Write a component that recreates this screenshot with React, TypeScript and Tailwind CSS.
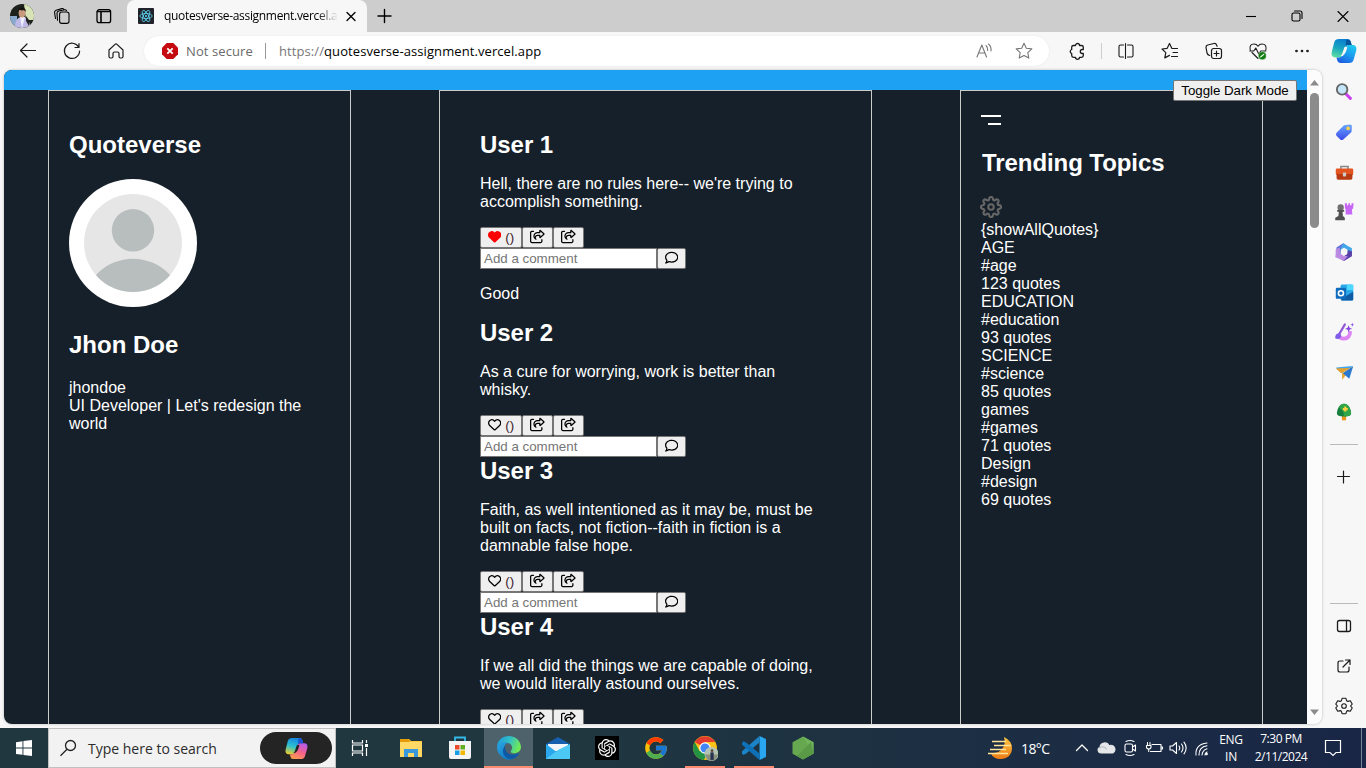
import type { ReactNode } from "react";
import { FaHeart, FaRegHeart, FaRegComment, FaRegShareFromSquare } from "react-icons/fa6";
import { FiSettings } from "react-icons/fi";
import { SiOpenai } from "react-icons/si";
import { FcGoogle } from "react-icons/fc";

type IconProps = { size?: number; children: ReactNode; w?: number; className?: string };

function Line({ size = 20, w = 1.1, children, className = "" }: IconProps) {
  return (
    <svg width={size} height={size} viewBox="0 0 20 20" fill="none" stroke="currentColor" strokeWidth={w} strokeLinecap="round" strokeLinejoin="round" className={`shrink-0 ${className}`}>
      {children}
    </svg>
  );
}

function Art({ size = 24, children }: IconProps) {
  return (
    <svg width={size} height={size} viewBox="0 0 24 24" fill="none" className="shrink-0">
      {children}
    </svg>
  );
}

function TabStrip() {
  return (
    <header className="flex h-8 shrink-0 bg-[#cdcdcd] text-black">
      <div className="flex w-[127px] items-center">
        <div className="ml-[10px] flex h-6 w-6 items-center justify-center overflow-hidden rounded-full">
          <svg width="24" height="24" viewBox="0 0 24 24">
            <rect width="24" height="24" fill="#1c211c" />
            <path d="M14 0h10v16h-8z" fill="#d8e4b5" />
            <path d="M0 12h7v12H0z" fill="#8aa9ce" />
            <path d="M5 24c0-7 2-11 7-11s8 4 8 11z" fill="#bdb8e6" />
            <path d="M10 13l2 11 3-11z" fill="#eef" />
            <ellipse cx="12" cy="9" rx="3.4" ry="4.6" fill="#c99a7d" />
            <path d="M8 8c-1-5 8-7 8 0l-2-2c-2 1-4 0-5 0z" fill="#17120f" />
            <path d="M16 12l3 4v6l-3-5z" fill="#222" />
          </svg>
        </div>
        <Line className="ml-[18px]">
          <rect x="7.6" y="6" width="9.4" height="11.4" rx="2.2" />
          <path d="M5.5 14.2 5 7.5Q4.900 5.500 6.800 5L12.600 3.800q1.400-.2 1.900.9M3.500 12.500 2.600 6.800q-.3-1.900 1.500-2.500l5.700-1.700q1.200-.3 1.900.6" />
        </Line>
        <Line className="ml-[22px]" w={1.3}>
          <rect x="3" y="3.700" width="13.600" height="13" rx="2.200" />
          <path d="M3.500 5.500h12.600M7 6.500v10" strokeWidth="1.600" />
        </Line>
      </div>
      <div className="flex h-8 w-[240px] items-center rounded-t-lg bg-[#f7f7f7]">
        <svg width="16" height="16" viewBox="0 0 16 16" className="ml-[11px] shrink-0" fill="none" stroke="#61dafb" strokeWidth=".8">
          <rect width="16" height="16" rx="1" fill="#20232a" stroke="none" />
          <ellipse cx="8" cy="8" rx="6.200" ry="2.500" />
          <ellipse cx="8" cy="8" rx="6.200" ry="2.500" transform="rotate(60 8 8)" />
          <ellipse cx="8" cy="8" rx="6.200" ry="2.500" transform="rotate(120 8 8)" />
          <circle cx="8" cy="8" r="1" fill="#61dafb" stroke="none" />
        </svg>
        <div className="ml-[10px] w-[174px] overflow-hidden bg-gradient-to-r from-black from-88% to-transparent bg-clip-text text-[12px] tracking-[-0.32px] whitespace-nowrap text-transparent">
          quotesverse-assignment.vercel.app
        </div>
        <Line className="ml-[3px]" w={1.300}>
          <path d="M6 6.500l8 8M14 6.500l-8 8" />
        </Line>
      </div>
      <div className="flex w-[34px] items-center justify-center">
        <Line w={1.400} className="-mt-px">
          <path d="M10.500 3.500v13M4 10h13" />
        </Line>
      </div>
      <div className="ml-auto flex w-[138px] items-center justify-around">
        <Line>
          <path d="M5 10.500h10" strokeLinecap="butt" />
        </Line>
        <Line>
          <rect x="5" y="7" width="8" height="8" rx="1.500" />
          <path d="M7.500 5h5.500q2 0 2 2v5.500" />
        </Line>
        <Line>
          <path d="M5 5.500l10 10M15 5.500L5 15.500" />
        </Line>
      </div>
    </header>
  );
}

function CopilotMark({ size = 26, dark = false }: { size?: number; dark?: boolean }) {
  const id = dark ? "cd" : "cl";
  return (
    <svg width={size} height={size} viewBox="0 0 24 24" className="shrink-0">
      <defs>
        <linearGradient id={`${id}1`} x1="0.500" y1="0" x2="0.200" y2="1">
          <stop offset="0" stopColor={dark ? "#1785e0" : "#0b7fd0"} />
          <stop offset=".5" stopColor={dark ? "#2ac0d0" : "#1aa6c0"} />
          <stop offset="1" stopColor={dark ? "#f2cd28" : "#5ee0a0"} />
        </linearGradient>
        <linearGradient id={`${id}2`} x1="0.800" y1="0" x2="0.300" y2="1">
          <stop offset="0" stopColor={dark ? "#b05cf0" : "#1fc8ee"} />
          <stop offset=".5" stopColor={dark ? "#f2608f" : "#1b9df0"} />
          <stop offset="1" stopColor={dark ? "#ff9a4d" : "#1e5fe0"} />
        </linearGradient>
      </defs>
      <path d="M7.500 1h8q2 0 2.600 2l1 3.500h-3c-1.800 0-2.700 1-3.200 2.500l-2 6c-.6 1.800-1.500 3-3.500 3H4c-2.500 0-4-2-3.300-5l2.300-9C3.700 2 5 1 7.500 1z" fill={`url(#${id}1)`} />
      <path d="M16.500 23h-8q-2 0-2.600-2l-.9-3h2.500c1.800 0 2.700-1 3.200-2.500l2-6c.6-1.800 1.500-3 3.500-3H20c2.500 0 4 2 3.300 5l-2.300 8c-.7 2.500-2 3.500-4.500 3.500z" fill={`url(#${id}2)`} />
      <path d="M14 1.500h2q1.600 0 2.100 1.700l1 3.300h-3c-1.200 0-2 .4-2.500 1.200z" fill={dark ? "#2251d0" : "#06559c"} />
      <path d="M12.300 8.500l2.700-.4q-.8 6-4.200 8.400l-2.300.2q1.500-.8 2-2.700z" fill={dark ? "#242424" : "#f7f7f7"} />
    </svg>
  );
}

function Toolbar() {
  const slot = "flex w-11 shrink-0 items-center justify-center";
  return (
    <nav className="flex h-[38px] shrink-0 items-center bg-[#f7f7f7] text-[#1b1b1b]">
      <div className="flex w-[144px] pl-[6px]">
        <div className={slot}>
          <Line w={1.200}><path d="M17.500 9.500H2.500M9 3L2.500 9.500 9 16" /></Line>
        </div>
        <div className={slot}>
          <Line w={1.200}><path d="M16.700 6.200A7.600 7.600 0 1 0 17.600 10M17 2.500v4h-4" /></Line>
        </div>
        <div className={slot}>
          <Line w={1.200}><path d="M3 9l6-5.600q1-.9 2 0L17 9v6.500q0 1.500-1.500 1.500h-1q-1.500 0-1.500-1.500v-3q0-1.500-1.500-1.500h-3Q7 11 7 12.500v3Q7 17 5.500 17h-1Q3 17 3 15.500z" /></Line>
        </div>
      </div>
      <div className="flex h-[30px] w-[905px] items-center rounded-full bg-white shadow-[0_0_2px_#e4e4e4]">
        <svg width="16" height="16" viewBox="0 0 16 16" className="ml-[18px]">
          <path d="M4.700 0h6.600L16 4.700v6.600L11.300 16H4.700L0 11.300V4.700z" fill="#c50b0f" />
          <path d="M5.300 5.300l5.400 5.400M10.700 5.300l-5.400 5.400" stroke="#fff" strokeWidth="1.800" />
        </svg>
        <span className="ml-2 w-[68px] pt-px text-[13px] tracking-[0.1px] whitespace-nowrap text-[#6a6a6a]">Not secure</span>
        <span className="ml-[11px] h-4 w-px bg-[#999]" />
        <span className="ml-[13px] pt-px text-[13px] tracking-[0.085px] whitespace-nowrap text-black">
          <span className="text-[#777]">https://</span>quotesverse-assignment.vercel.app
        </span>
        <div className="ml-auto mr-[15px] flex gap-5 text-[#777]">
          <Line>
            <path d="M3 16L7.800 4 12.500 16M4.800 12h6.200M12 4.500q2 1.800 1.700 5M14.500 3q3 2.500 2.500 7" />
          </Line>
          <Line>
            <path d="M10 2.200l2.300 5 5.500.7-4 3.800 1 5.400-4.800-2.700-4.800 2.700 1-5.400-4-3.800 5.500-.7z" />
          </Line>
        </div>
      </div>
      <div className="flex w-[53px] items-center">
        <Line className="ml-[18px]" w={1.300}>
          <path d="M6.500 4.500h2a2 2 0 0 1 4 0h2q1.800 0 1.800 1.800V8.500h-1a2 2 0 0 0 0 4h1v2q0 1.800-1.800 1.800h-2a2 2 0 0 1-4 0h-2q-1.800 0-1.800-1.800v-2a2.100 2.100 0 0 1 0-4V6.300q0-1.800 1.800-1.800z" />
        </Line>
        <span className="ml-[14px] h-4 w-px bg-[#ccc]" />
      </div>
      <div className="-ml-px flex">
        <div className="flex w-[49px] shrink-0 items-center justify-center">
          <Line><path d="M7.500 4H4.500Q3 4 3 5.500v9Q3 16 4.500 16h3M11.500 4h4Q17 4 17 5.500v9q0 1.500-1.500 1.500h-4M9.500 2.500v15" /></Line>
        </div>
        <div className="flex w-[39px] items-center justify-center">
          <Line w={1.2}><path d="M13 7.500L11.800 7.300 9.500 2.500 7.200 7.300 2 8l3.800 3.600-1 5.300 4.700-2.500M12.500 7.500H17.500M13 11.500h4.500M11.500 15.500h6" /></Line>
        </div>
        <div className="flex w-[49px] items-center justify-center">
          <Line w={1.2}><rect x="7.500" y="7.500" width="10" height="10" rx="2.200" /><path d="M12.500 10v5M10 12.500h5M5.700 14.500Q3.600 14 3 12L2 6.500Q1.800 4.500 3.700 4L10 2.500q2-.3 2.600 1.500l.5 1.300" /></Line>
        </div>
        <div className="flex w-[39px] items-center justify-center">
          <Line><path d="M2.200 9Q1 3 6 3q2.500 0 4 2.200Q11.500 3 14 3q5 0 3.900 6M4 11.500l6 6M1.800 10h4l2-3 3 6 2-3h5" /><circle cx="14.300" cy="14.700" r="4" fill="#107c10" stroke="#f7f7f7" strokeWidth=".4" /><path d="M12.800 15.800l3-2.400" stroke="#fff" /></Line>
        </div>
        <div className="flex w-[49px] items-center justify-center">
          <Line><circle cx="4.500" cy="10" r=".8" fill="currentColor" /><circle cx="10" cy="10" r=".8" fill="currentColor" /><circle cx="15.500" cy="10" r=".8" fill="currentColor" /></Line>
        </div>
      </div>
      <div className="ml-[5px]"><CopilotMark /></div>
    </nav>
  );
}

const actionButton = "flex h-[21px] items-center justify-center rounded-[2px] border border-[#767676] bg-[#efefef] pb-[2px] text-black";

type Quote = { user: string; lines: string[]; liked?: boolean; comment?: string };

const quotes: Quote[] = [
  { user: "User 1", lines: ["Hell, there are no rules here-- we're trying to", "accomplish something."], liked: true, comment: "Good" },
  { user: "User 2", lines: ["As a cure for worrying, work is better than", "whisky."] },
  { user: "User 3", lines: ["Faith, as well intentioned as it may be, must be", "built on facts, not fiction--faith in fiction is a", "damnable false hope."] },
  { user: "User 4", lines: ["If we all did the things we are capable of doing,", "we would literally astound ourselves."] },
];

function QuoteItem({ user, lines, liked, comment }: Quote) {
  return (
    <article>
      <h2 className="text-2xl leading-7 font-bold tracking-[-0.05px]">{user}</h2>
      <p className="my-4 whitespace-nowrap">
        {lines.map((l) => (
          <span key={l} className="block">{l}</span>
        ))}
      </p>
      <div className="flex text-[13.333px] leading-[17px]">
        <button className={`${actionButton} w-[42px] gap-1`}>
          {liked ? <FaHeart size={13.333} color="red" /> : <FaRegHeart size={13.333} />}
          <span className="pt-px text-[#3d1a30]">()</span>
        </button>
        <button className={`${actionButton} w-[31px]`}><FaRegShareFromSquare size={15} /></button>
        <button className={`${actionButton} w-[31px]`}><FaRegShareFromSquare size={15} /></button>
      </div>
      <div className="flex">
        <input className="h-[21px] w-[177px] border border-[#767676] bg-white px-[3px] text-[13.333px] text-black placeholder:text-[#757575]" placeholder="Add a comment" />
        <button className={`${actionButton} w-[29px]`}><FaRegComment size={13.333} /></button>
      </div>
      {comment && <p className="my-4">{comment}</p>}
    </article>
  );
}

const topics = ["AGE", "#age", "123 quotes", "EDUCATION", "#education", "93 quotes", "SCIENCE", "#science", "85 quotes", "games", "#games", "71 quotes", "Design", "#design", "69 quotes"];

function Page() {
  return (
    <main className="relative ml-1 flex h-[654px] w-[1318px] overflow-hidden rounded-lg bg-[#fcfcfc] shadow-[0_0_2px_1px_#d8d8d8]">
      <div className="flex w-[1303px] flex-col bg-[#16202a] font-['Liberation_Sans',Arial,sans-serif] text-base leading-[18px] text-white">
        <div className="h-5 shrink-0 bg-[#1da1f2]" />
        <div className="flex h-[634px] justify-between pr-11 pl-11">
          <section className="w-[303px] border-x border-t border-[#ccc] p-5">
            <h2 className="mt-5 text-2xl leading-7 font-bold">Quoteverse</h2>
            <svg width="128" height="128" viewBox="0 0 128 128" className="mt-5">
              <clipPath id="disc"><circle cx="64" cy="64" r="49" /></clipPath>
              <circle cx="64" cy="64" r="64" fill="#fff" />
              <circle cx="64" cy="64" r="49" fill="#e6e6e6" />
              <circle cx="64" cy="51.300" r="21.200" fill="#b8bebd" />
              <circle cx="64" cy="130" r="50.300" fill="#b8bebd" clipPath="url(#disc)" />
            </svg>
            <h2 className="mt-6 mb-5 text-2xl leading-7 font-bold">Jhon Doe</h2>
            <div>jhondoe</div>
            <div>UI Developer | Let's redesign the world</div>
          </section>
          <section className="w-[433px] overflow-hidden border-x border-t border-[#ccc] px-10 pt-10">
            {quotes.map((q) => <QuoteItem key={q.user} {...q} />)}
          </section>
          <section className="w-[303px] border-x border-t border-[#ccc] p-5">
            <svg width="20" height="18" viewBox="0 0 20 18" className="block" fill="#fff"><path d="M0 4h20v2H0zM7 12h13v2H7z" /></svg>
            <h2 className="mt-5 ml-px text-2xl leading-7 font-bold tracking-[-0.070px]">Trending Topics</h2>
            <FiSettings size={22} className="-ml-px mt-[19px] mb-[3px] block text-[#666]" strokeWidth={2.300} />
            <div>{"{showAllQuotes}"}</div>
            {topics.map((t) => <div key={t}>{t}</div>)}
          </section>
        </div>
      </div>
      <div className="flex w-[15px] flex-col items-center">
        <svg width="9" height="6" viewBox="0 0 9 6" className="mt-[10px]"><path d="M0 5.500L4.500 0 9 5.500z" fill="#8b8b8b" /></svg>
        <div className="mt-[7px] h-[135px] w-[9px] rounded-full bg-[#8b8b8b]" />
        <svg width="9" height="6" viewBox="0 0 9 6" className="mt-auto mb-[9px]"><path d="M0 .5L4.500 6 9 .5z" fill="#8b8b8b" /></svg>
      </div>
      <button className="absolute top-[10px] right-[25px] h-[21px] w-[124px] rounded-[2px] border border-[#767676] bg-[#efefef] font-['Liberation_Sans',Arial,sans-serif] text-[13.333px] leading-[19px] tracking-[-0.05px] whitespace-nowrap text-black">
        Toggle Dark Mode
      </button>
    </main>
  );
}

function Sidebar() {
  const cell = "flex h-10 items-center justify-center";
  return (
    <aside className="flex w-[44px] flex-col bg-[#f7f7f7] pt-[2px] text-[#1b1b1b]">
      <div className={cell}>
        <Art size={18}><path d="M14 14l6.500 6.500" stroke="#c840f0" strokeWidth="4" strokeLinecap="round" /><circle cx="9.500" cy="8.500" r="7" fill="#c4e6fa" stroke="#666" strokeWidth="2.500" /></Art>
      </div>
      <div className={cell}>
        <Art size={18}><path d="M12 3l8-1q2.500 0 2.500 2L22 12 11 22q-2 1.500-4 0l-5-5q-1.500-2 0-4z" fill="url(#tag)" /><circle cx="17.500" cy="7" r="2.500" fill="#ffd24a" /><defs><linearGradient id="tag" x1="0" y1="0" x2="0" y2="1"><stop stopColor="#68a8ff" /><stop offset="1" stopColor="#3a49e8" /></linearGradient></defs></Art>
      </div>
      <div className={cell}>
        <Art size={19}><path d="M7.500 8V4.500h9V8" stroke="#888" strokeWidth="2" /><rect x="1" y="7" width="22" height="8" rx="1.500" fill="#e45420" /><path d="M2 14h20v5q0 2-2 2H4q-2 0-2-2z" fill="#b83a12" /><rect x="10" y="12" width="4" height="5" rx="1" fill="#ccc" /></Art>
      </div>
      <div className={cell}>
        <Art size={20}>
          <path d="M13 1.500h2.500V4h1.700V1.500h2V4H21V1.500h2.500l-.5 6-1.500 1.500.5 6h-8V9L13 7z" fill="#c866f5" />
          <circle cx="8" cy="6.500" r="3.800" fill="#707070" /><path d="M3.800 9.500h8.400v2.200h-2l.5 5 2.300 2.300v3H1.500v-3l3.800-2.300.5-5h-2z" fill="#505050" />
        </Art>
      </div>
      <div className={cell}>
        <Art size={20}>
          <path d="M3 6.500L11 1.500l3 1.800L8.500 8v7L2 18.500z" fill="#5a70d8" />
          <path d="M11 1.500l10.500 6v8.700L16 12.500 16 9l-4-2-5 2.500z" fill="#44a8e8" />
          <path d="M21.500 11v6l-9.500 5.800-5-3 8.500-5 1-5z" fill="#5a3fa8" />
          <path d="M2 18.200V9l5-2.800v7l4.500 3.300 5 .5-5 5.500z" fill="#bb8ae2" />
          <path d="M12 7.800l4 2.300v4L12 16.400l-4-2.300v-4z" fill="#f7f7f7" />
        </Art>
      </div>
      <div className={cell}>
        <Art size={19}><rect x="7" y="2" width="16" height="20" rx="2" fill="#28a8ea" /><path d="M15 2h8v7h-8z" fill="#50d9ff" /><path d="M8 20l15-9v10q0 1-1 1H8z" fill="#0f5ca5" /><rect x="1" y="6" width="13" height="14" rx="1.500" fill="#0f6cbd" /><circle cx="7.500" cy="13" r="3.200" stroke="#fff" strokeWidth="2" /></Art>
      </div>
      <div className={cell}>
        <Art size={20}>
          <path d="M5 14.500Q6 20 12 20q7 0 7.500-9" stroke="#dd85f5" strokeWidth="4.500" />
          <path d="M13 3L6 15" stroke="#9358d8" strokeWidth="2.800" strokeLinecap="round" />
          <path d="M1.500 19.500q-.5-5.500 4.500-6 4 1.500 2 5-3 3-6.500 1z" fill="#7f5cea" />
          <path d="M17.500 4l1.200 3 3 1.200-3 1.200-1.200 3-1.200-3-3-1.200 3-1.200zM22 1l.6 1.700 1.600.6-1.600.6L22 5.600l-.6-1.700-1.600-.6 1.600-.6z" fill="#8848e8" />
        </Art>
      </div>
      <div className={cell}>
        <Art size={19}><path d="M1 6l22-2-15 9z" fill="#41a5ee" /><path d="M23 4L9 13v8l4-5z" fill="#e8a22b" /><path d="M1 7l18-1L8 13z" fill="#e8a22b" /><path d="M23 4L10 13l8 7z" fill="#2878d0" /><path d="M1 5.500L23 4 13 6.500z" fill="#41a5ee" /></Art>
      </div>
      <div className={cell}>
        <Art size={20}><path d="M9.500 16h5v6h-5z" fill="#ee9520" /><path d="M12 2C6 2 4 9 3.500 13c-.3 3.500 3 4.500 8.500 4.500s8.800-1 8.500-4.500C20 9 18 2 12 2z" fill="#16803f" /><path d="M12 2c-3 0-5 2-6.300 5q6 2 6.300 10.500c5.500 0 8.800-1 8.500-4.500C20 9 18 2 12 2z" fill="#30a648" /><path d="M13.500 5.500v6M10.500 8.500h6" stroke="#ffd040" strokeWidth="2.500" /></Art>
      </div>
      <div className="mx-auto mt-[12px] h-px w-7 bg-[#bbb]" />
      <div className="mt-[22px] flex justify-center"><Line w={1.200}><path d="M9.500 4v12M3.500 9.500h12" /></Line></div>
      <div className="mx-auto mt-[116px] h-px w-7 bg-[#bbb]" />
      <div className="mt-[2px]">
        <div className={cell}><Line w={1.300}><rect x="3.500" y="4.500" width="13" height="11" rx="2" /><path d="M12.500 5v10" /></Line></div>
        <div className={cell}><Line w={1.200}><path d="M9 5H6Q4 5 4 7v7q0 2 2 2h7q2 0 2-2v-3M11.500 4H16v4.500M16 4l-7 7" /></Line></div>
        <div className={cell}><Line><circle cx="10" cy="10" r="2.300" /><path d="M8.100 2.300h3.800l.7 2.400 1.200.7 2.500-.6 1.900 3.300L16.500 10l1.700 1.900-1.900 3.300-2.500-.6-1.200.7-.7 2.400H8.100l-.7-2.400-1.200-.7-2.500.6-1.900-3.300L3.500 10 1.800 8.100l1.900-3.300 2.500.6 1.200-.7z" /></Line></div>
      </div>
    </aside>
  );
}

function AppButton({ children, state = "" }: { children: ReactNode; state?: "" | "active" | "open" }) {
  const look = state === "active" ? "bg-[#4d626b]" : "";
  return (
    <div className={`flex h-10 w-[49px] flex-col items-center ${look}`}>
      <div className="flex h-[38px] w-full shrink-0 items-center justify-center pt-[2px]">{children}</div>
      {state && <div className={state === "active" ? "h-[2px] w-full bg-[#fb8b71]" : "h-[2px] w-10 bg-[#fb8b71]"} />}
    </div>
  );
}

function Taskbar() {
  return (
    <footer className="flex h-10 shrink-0 bg-gradient-to-r from-[#20373f] from-40% to-[#192646] text-white">
      <div className="flex w-12 items-center justify-center">
        <svg width="16" height="16" viewBox="0 0 16 16" fill="#fff"><path d="M0 2.200L6.500 1.200V7.500H0zM7.400 1.100L16 0v7.500H7.400zM0 8.400h6.500v6.400L0 13.900zM7.400 8.400H16V16l-8.600-1.100z" /></svg>
      </div>
      <div className="flex w-[288px] items-center border border-[#c0c0c0] bg-[#f2f2f2] text-[#2c2c2c]">
        <svg width="18" height="18" viewBox="0 0 18 18" className="ml-[10px]" fill="none" stroke="#222" strokeWidth="1.300"><circle cx="11.500" cy="6.500" r="5" /><path d="M8 10.200L1.500 16.800" /></svg>
        <span className="ml-[11px] w-[128px] text-[14px] whitespace-nowrap">Type here to search</span>
        <div className="ml-auto mr-[3px] flex h-8 w-[72px] items-center justify-center rounded-full bg-[#242424]"><CopilotMark size={23} dark /></div>
      </div>
      <div className="flex w-[48px] items-center justify-center">
        <svg width="18" height="18" viewBox="0 0 18 18" fill="none" stroke="#fff" strokeWidth="1.200"><path d="M1.500 1v3h10V1M1.500 17v-3h10v3M1.500 6h10v6h-10zM15.500 1v3M15.500 9v8" /><path d="M14 5h3v3h-3z" fill="#fff" stroke="none" /></svg>
      </div>
      <div className="ml-[2px] flex">
        <AppButton>
          <Art><path d="M1 3h9l2 2h11v16H1z" fill="#ffc83d" /><path d="M1 3h8l2 2v1H1z" fill="#e59b08" /><path d="M1 6h22v15H1z" fill="#ffd866" /><path d="M5 21v-8h14v8h-4v-4H9v4z" fill="#3a98dc" /></Art>
        </AppButton>
        <AppButton>
          <Art><path d="M7 6V1.500h10V6" stroke="#35b9e6" strokeWidth="1.800" /><path d="M1 5h22v16q0 2-2 2H3q-2 0-2-2z" fill="#f4f4f4" /><path d="M7 9h4.500v4.500H7z" fill="#e84a2b" /><path d="M12.500 9H17v4.500h-4.500z" fill="#65ad20" /><path d="M7 14.500h4.500V19H7z" fill="#179fe5" /><path d="M12.500 14.500H17V19h-4.500z" fill="#f5b800" /></Art>
        </AppButton>
        <AppButton state="active">
          <Art>
            <defs><linearGradient id="e1" x1="0" y1="0" x2="1" y2=".3"><stop stopColor="#1996dc" /><stop offset=".55" stopColor="#32bfc7" /><stop offset="1" stopColor="#6ee858" /></linearGradient><linearGradient id="e2" x1="0" y1="0" x2="1" y2="1"><stop stopColor="#29a7e8" /><stop offset="1" stopColor="#0864ae" /></linearGradient></defs>
            <path d="M0 11C1-4 23-3 24 11c0 5-5 7-9 6-2-1-1-2 0-4 1-5-4-7-8-6-3 0-6 1-7 4z" fill="url(#e1)" />
            <path d="M0 11c1-4 7-6 11-4C5 8 6 18 14 19c4 0 7-2 8-2-4 8-14 9-19 2-2-2-3-5-3-8z" fill="url(#e2)" />
            <path d="M8 10c-5 6 0 13 7 13 4-1 6-3 7-6-5 3-14 3-14-7z" fill="#0f58a6" />
          </Art>
        </AppButton>
        <AppButton>
          <Art><path d="M0 8l12-7 12 7v4H0z" fill="#1760b0" /><path d="M2 8h20v7H2z" fill="#f3f7fa" /><path d="M0 8l12 9L24 8v15H0z" fill="#2ba8ec" /><path d="M0 23L12 14l12-6v15z" fill="#4cc8f5" /></Art>
        </AppButton>
        <AppButton>
          <div className="flex h-6 w-6 items-center justify-center bg-black"><SiOpenai size={18} /></div>
        </AppButton>
        <AppButton><FcGoogle size={26} /></AppButton>
        <AppButton state="open">
          <Art size={26}>
            <circle cx="12" cy="12" r="11" fill="#fbc116" /><path d="M12 12L2.500 6.500A11 11 0 0 1 21.500 6.500H12z" fill="#e33b2e" /><path d="M12 12L7 15 2.500 6.500A11 11 0 0 0 11 23l3-6z" fill="#229342" /><circle cx="12" cy="12" r="5.300" fill="#fff" /><circle cx="12" cy="12" r="4.200" fill="#4285f4" /><circle cx="18" cy="17.500" r="6.500" fill="#b4c4b2" /><path d="M12 18h12q-1 6-6 6t-6-6z" fill="#8a9180" /><path d="M17 16h3v7h-3z" fill="#27334f" /><circle cx="18.500" cy="14.500" r="1.300" fill="#5c463c" />
          </Art>
        </AppButton>
        <AppButton state="open">
          <Art><path d="M17.500 0L24 3v18l-6.500 3z" fill="#29a6ef" /><path d="M17.500 0v6.500L4.500 17.200 1.500 19 0 17.300v-2z" fill="#1b83c8" /><path d="M17.500 24v-6.500L4.500 6.800 1.500 5.200 0 7v1.700z" fill="#0e71b8" /></Art>
        </AppButton>
        <AppButton>
          <Art><path d="M12 .5l10.500 5.700v11.600L12 23.500 1.500 17.800V6.200z" fill="#66a850" /><path d="M12 .5l10.500 5.700v11.600z" fill="#71b45a" /><path d="M12 23.500L22.500 17.800 20 6 6 20z" fill="#5a9a46" /></Art>
        </AppButton>
      </div>
      <div className="ml-auto flex items-center text-[12px]">
        <svg width="24" height="24" viewBox="0 0 24 24"><defs><linearGradient id="moon" x1="0" y1="0" x2="0" y2="1"><stop stopColor="#ffc642" /><stop offset="1" stopColor="#ec7b16" /></linearGradient></defs><path d="M16 1q8 4 8 11c0 7-5 11-11 11-5 0-9-2-10-6 9 1 16-6 13-16z" fill="url(#moon)" /><path d="M4 5.500h14M6 9.500h17M2 13.500h16M0 17.500h20" stroke="#ffe49a" strokeWidth="1.700" /></svg>
        <span className="ml-[9px] w-[29px] text-[14px] tracking-[-0.600px] whitespace-nowrap">18°C</span>
        <div className="ml-[22px] flex gap-[4px]">
          <Line w={1.3}><path d="M4.500 12.500l5.500-5.500 5.500 5.500" /></Line>
          <Line><path d="M5 15a3 3 0 0 1-1-5.800 4.700 4.700 0 0 1 9-1.400 3.800 3.800 0 0 1 3.800 7.200z" fill="#e5e7e9" stroke="#e5e7e9" /><path d="M3.500 10q4-3 7 1" stroke="#b5bcc4" /></Line>
          <Line><rect x="5" y="6" width="7.500" height="8" rx="1.500" /><path d="M12.500 9l3-2v6l-3-2M6 3.500q4-2 8 0M6 16.500q4 2 8 0" /></Line>
          <Line><path d="M8 6.500h9v7H6.500M17 9h1.500v2H17M3.500 4.500v2.500M6 4.500v2.500M2.500 7.500H7v2Q6.500 11 4.700 11T2.500 9.500zM4.700 11v2.500" /></Line>
          <Line><path d="M2 8h2.500L8.500 4.500v11L4.500 12H2zM11 8q1.500 2 0 4M13.500 6q3 4 0 8M16 4.200q4.300 5.800 0 11.600" /></Line>
          <Line><path d="M4 17Q3 6.500 15 5M7 17q0-8 8-9.200M10 17q.5-4.800 5-6.200M13 17q0-2 2-3" /><circle cx="14.500" cy="16" r=".8" fill="#fff" /></Line>
        </div>
        <div className="ml-[4px] w-[30px] text-center leading-[17px] tracking-[-0.300px]">ENG<br />IN</div>
        <div className="ml-[6px] w-[58px] text-center leading-[18px] tracking-[-0.480px] whitespace-nowrap">7:30 PM<br />2/11/2024</div>
        <svg width="18" height="18" viewBox="0 0 18 18" className="mr-[19px] ml-[14px]" fill="none" stroke="#fff" strokeWidth="1.200"><path d="M1.500 1.500h15v12H12l-3 3-3-3H1.500z" /></svg>
        <span className="mr-[4px] h-10 w-px bg-[#77819a]" />
      </div>
    </footer>
  );
}

export default function App() {
  return (
    <div className="flex h-[768px] w-[1366px] flex-col overflow-hidden bg-[#f7f7f7] font-['Open_Sans','Noto_Sans',sans-serif]">
      <TabStrip />
      <Toolbar />
      <div className="flex h-[658px] shrink-0">
        <Page />
        <Sidebar />
      </div>
      <Taskbar />
    </div>
  );
}
